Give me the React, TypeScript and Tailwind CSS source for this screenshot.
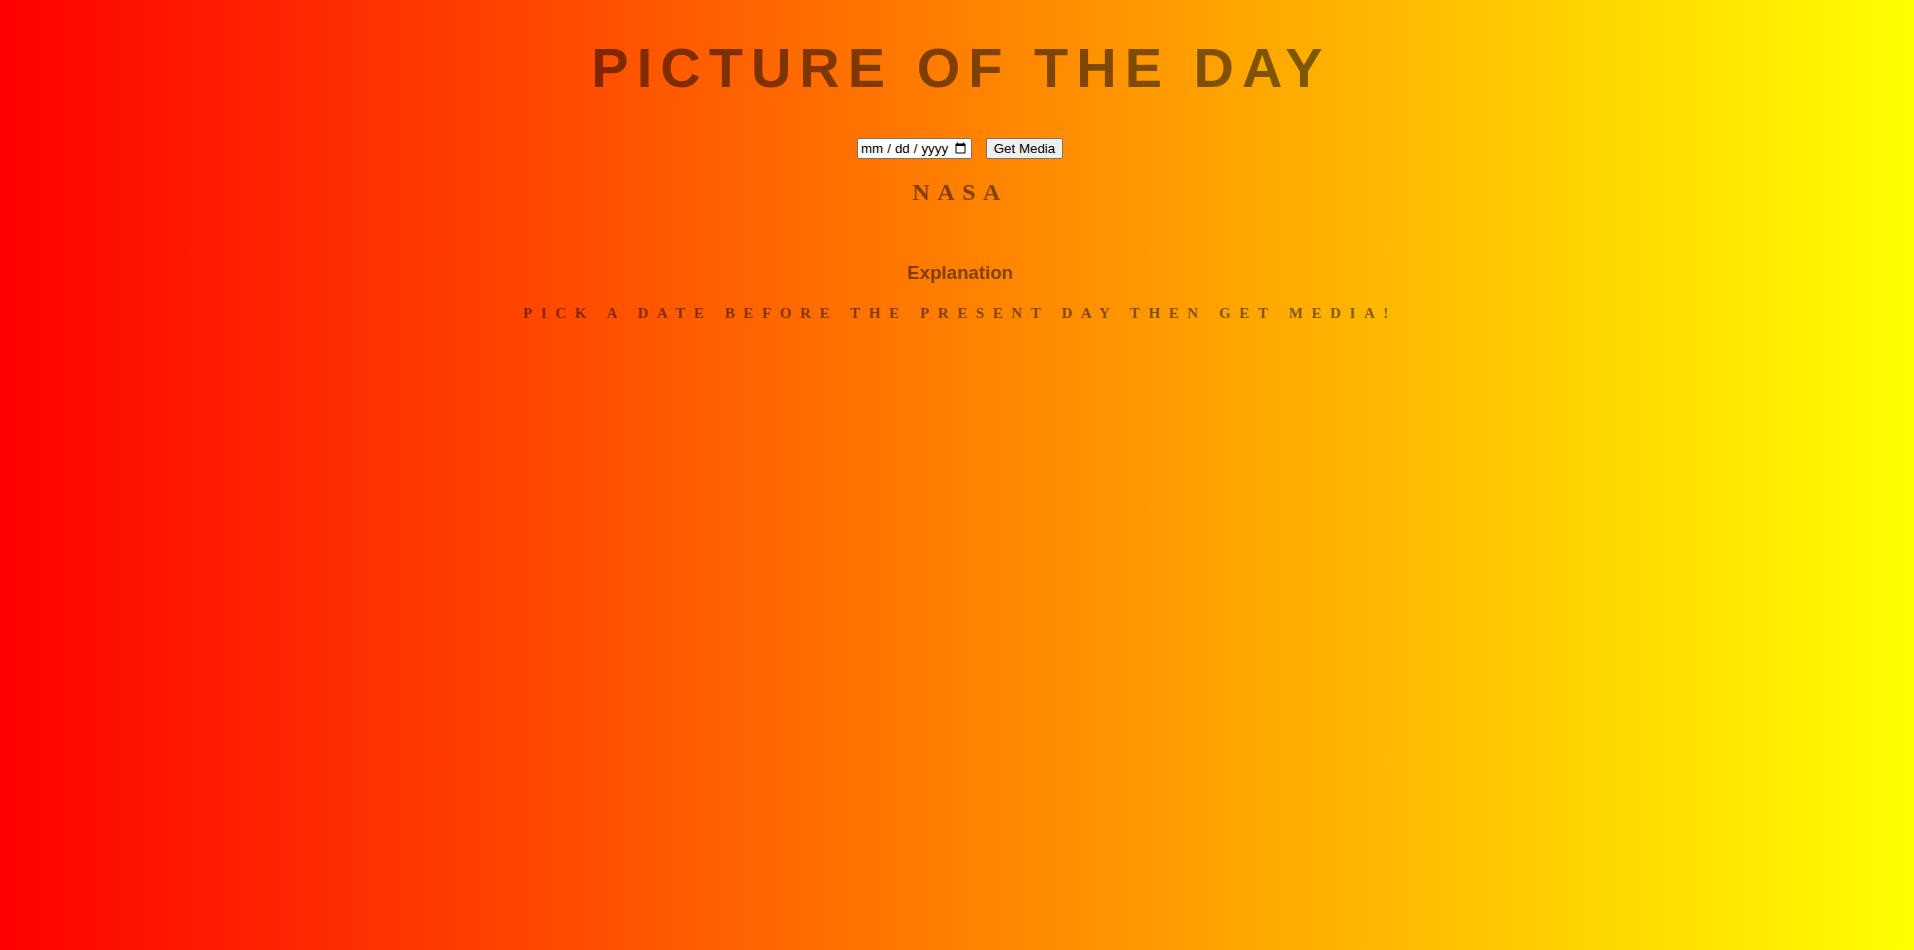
import React from "react";

export default function App() {
  return (
    <div className="min-h-[950px] w-full bg-[linear-gradient(to_right,#ff0000,#ffff00)] flex flex-col items-center pl-[6px] text-black/50">
      <h1 className="mt-[36px] pl-[2px] text-[56px] leading-[64px] font-bold tracking-[8px] font-['Liberation_Sans',Arial,sans-serif]">
        PICTURE OF THE DAY
      </h1>
      <div className="mt-[38px] flex items-center gap-[14px] font-['Liberation_Sans',Arial,sans-serif] text-[13.33px] text-black">
        <input
          type="date"
          className="w-[115px] h-[21px] bg-white border border-[#767676] rounded-[2px] px-[2px] text-[13.33px] leading-[17px] [&::-webkit-datetime-edit-text]:px-[3px]"
        />
        <button className="h-[21px] w-[77px] bg-[#efefef] border border-[#767676] rounded-[2px] px-[6px] text-[13.33px] leading-[17px] text-black">
          Get Media
        </button>
      </div>
      <h2 className="mt-[18px] text-[24px] leading-[30px] font-bold tracking-[7.5px] font-['Liberation_Serif','Times_New_Roman',serif]">
        NASA
      </h2>
      <h3 className="mt-[54px] text-[18.72px] leading-[24px] font-bold font-['Liberation_Sans',Arial,sans-serif]">
        Explanation
      </h3>
      <p className="mt-[18px] text-[15px] leading-[20px] font-bold uppercase tracking-[8.6px] font-['Liberation_Serif','Times_New_Roman',serif]">
        Pick a date before the present day then get media!
      </p>
    </div>
  );
}
